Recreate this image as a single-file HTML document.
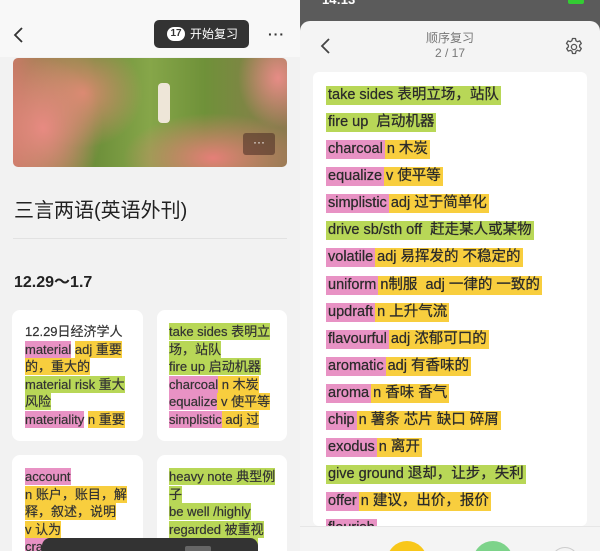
<!DOCTYPE html>
<html><head><meta charset="utf-8"><style>
*{margin:0;padding:0;box-sizing:border-box}
body{width:600px;height:551px;overflow:hidden;position:relative;font-family:"Liberation Sans","Noto Sans CJK SC",sans-serif;color:#333;background:#f2f2f2}
.a{position:absolute}
.p{background:#e892c4}.y{background:#f8ce3e}.g{background:#b8d757}
#L{left:0;top:0;width:300px;height:551px;background:#f2f2f2;overflow:hidden}
#R{left:300px;top:0;width:300px;height:551px;background:#5b5b5b;overflow:hidden}
.card{position:absolute;background:#fff;border-radius:8px;font-size:13px;line-height:17.5px;color:#333;overflow:hidden;-webkit-text-stroke:0.2px #333}
.card span{padding:1px 0}
.row{position:absolute;left:13px;font-size:14.5px;line-height:19px;white-space:nowrap;color:#2a2a2a;-webkit-text-stroke:0.25px #2a2a2a}
.row span{display:inline-block;height:19px;padding:0 2px}
</style></head><body>
<div id="L" class="a">
  <div class="a" style="left:0;top:0;width:300px;height:57px;background:#f8f8f8"></div>
  <svg class="a" style="left:12px;top:26px" width="14" height="18"><path d="M10 2 L3 9 L10 16" stroke="#333" stroke-width="1.8" fill="none"/></svg>
  <div class="a" style="left:154px;top:20px;width:95px;height:28px;background:#333;border-radius:5px;color:#fff;font-size:12px;line-height:28px">
    <span class="a" style="left:13px;top:7px;width:18px;height:14px;border-radius:7px;background:#fff;color:#333;font-size:10px;line-height:14px;text-align:center;font-weight:bold">17</span>
    <span class="a" style="left:36px;top:0">开始复习</span></div>
  <div class="a" style="left:268px;top:26px;font-size:14px;font-weight:bold;letter-spacing:1px">···</div>
  <div class="a" style="left:13px;top:58px;width:274px;height:109px;border-radius:5px;overflow:hidden;background:
   radial-gradient(ellipse 60px 70px at 30px 70px,#e88a82,transparent),
   radial-gradient(ellipse 90px 45px at 200px 100px,#e57f78,transparent),
   radial-gradient(ellipse 40px 50px at 265px 20px,#e68c86,transparent),
   radial-gradient(ellipse 60px 55px at 70px 35px,#d98a70,transparent),
   linear-gradient(90deg,#c77a66 0%,#6d8f3a 30%,#86a649 50%,#6f9139 70%,#8d7a4f 100%)">
    <div class="a" style="left:145px;top:25px;width:12px;height:40px;background:#eee6d8;border-radius:4px"></div>
    <div class="a" style="left:230px;top:75px;width:32px;height:22px;background:rgba(80,50,40,.6);border-radius:3px;color:#fff;font-size:12px;text-align:center;line-height:18px">···</div>
  </div>
  <div class="a" style="left:14px;top:194px;font-size:20px;color:#222">三言两语(英语外刊)</div>
  <div class="a" style="left:13px;top:238px;width:274px;height:1px;background:#e2e2e2"></div>
  <div class="a" style="left:14px;top:268px;font-size:16px;font-weight:bold;color:#222">12.29～1.7</div>
  <div class="card" style="left:12px;top:310px;width:131px;height:131px;padding:13px 10px 0 13px">
    <span>12.29日经济学人</span><br><span class="p">material</span> <span class="y">adj 重要的，重大的</span><br><span class="g">material risk 重大风险</span><br><span class="p">materiality</span> <span class="y">n 重要</span></div>
  <div class="card" style="left:157px;top:310px;width:130px;height:131px;padding:13px 8px 0 12px">
    <span class="g">take sides 表明立场，站队</span><br><span class="g">fire up 启动机器</span><br><span class="p">charcoal</span><span class="y"> n 木炭</span><br><span class="p">equalize</span><span class="y"> v 使平等</span><br><span class="p">simplistic</span><span class="y"> adj 过</span></div>
  <div class="card" style="left:12px;top:455px;width:131px;height:120px;padding:13px 10px 0 13px">
    <span class="p">account</span><br><span class="y">n 账户，账目，解释，叙述，说明</span><br><span class="y">v 认为</span><br><span class="p">crash</span></div>
  <div class="card" style="left:157px;top:455px;width:130px;height:120px;padding:13px 8px 0 12px">
    <span class="g">heavy note 典型例子</span><br><span class="g">be well /highly regarded 被重视</span><br><span class="g">xxxxxxxxxxxx n</span></div>
  <div class="a" style="left:42px;top:538px;width:216px;height:20px;background:#333;border-radius:8px 8px 0 0"></div>
  <div class="a" style="left:185px;top:546px;width:26px;height:6px;background:#666;border-radius:2px"></div>
</div>
<div id="R" class="a">
  <div class="a" style="left:22px;top:-8px;color:#fff;font-size:13px;font-weight:bold">14:13</div>
  <div class="a" style="left:268px;top:-4px;width:16px;height:8px;background:#3c3;border-radius:2px"></div>
  <div class="a" style="left:0;top:21px;width:300px;height:540px;background:#f4f4f4;border-radius:10px 10px 0 0"></div>
  <svg class="a" style="left:19px;top:37px" width="14" height="18"><path d="M10 2 L3 9 L10 16" stroke="#444" stroke-width="1.8" fill="none"/></svg>
  <div class="a" style="left:0;top:31px;width:300px;text-align:center;font-size:12px;color:#777;line-height:15px">顺序复习<br>2 / 17</div>
  <svg class="a" style="left:264px;top:37px" width="20" height="20" viewBox="0 0 20 20"><path d="M8.5 1.5h3l.5 2.3 1.6.9 2.2-.8 1.5 2.6-1.7 1.6v1.8l1.7 1.6-1.5 2.6-2.2-.8-1.6.9-.5 2.3h-3l-.5-2.3-1.6-.9-2.2.8-1.5-2.6 1.7-1.6V8.1L2.5 6.5 4 3.9l2.2.8 1.6-.9z" fill="none" stroke="#555" stroke-width="1.3" stroke-linejoin="round"/><circle cx="10" cy="10" r="2.6" fill="none" stroke="#555" stroke-width="1.3"/></svg>
  <div class="a" style="left:13px;top:72px;width:274px;height:454px;background:#fff;border-radius:6px;overflow:hidden">
    <div class="row" style="top:14px"><span class="g">take sides 表明立场，站队</span></div>
    <div class="row" style="top:41px"><span class="g">fire up&nbsp; 启动机器</span></div>
    <div class="row" style="top:68px"><span class="p">charcoal</span><span class="y">n 木炭</span></div>
    <div class="row" style="top:95px"><span class="p">equalize</span><span class="y">v 使平等</span></div>
    <div class="row" style="top:122px"><span class="p">simplistic</span><span class="y">adj 过于简单化</span></div>
    <div class="row" style="top:149px"><span class="g">drive sb/sth off&nbsp; 赶走某人或某物</span></div>
    <div class="row" style="top:176px"><span class="p">volatile</span><span class="y">adj 易挥发的 不稳定的</span></div>
    <div class="row" style="top:204px"><span class="p">uniform</span><span class="y">n制服&nbsp; adj 一律的 一致的</span></div>
    <div class="row" style="top:231px"><span class="p">updraft</span><span class="y">n 上升气流</span></div>
    <div class="row" style="top:258px"><span class="p">flavourful</span><span class="y">adj 浓郁可口的</span></div>
    <div class="row" style="top:285px"><span class="p">aromatic</span><span class="y">adj 有香味的</span></div>
    <div class="row" style="top:312px"><span class="p">aroma</span><span class="y">n 香味 香气</span></div>
    <div class="row" style="top:339px"><span class="p">chip</span><span class="y">n 薯条 芯片 缺口 碎屑</span></div>
    <div class="row" style="top:366px"><span class="p">exodus</span><span class="y">n 离开</span></div>
    <div class="row" style="top:393px"><span class="g">give ground 退却，让步，失利</span></div>
    <div class="row" style="top:420px"><span class="p">offer</span><span class="y">n 建议，出价，报价</span></div>
    <div class="row" style="top:447px"><span class="p">flourish</span></div>
  </div>
  <div class="a" style="left:0;top:526px;width:300px;height:30px;background:#f4f4f4;border-top:1px solid #e6e6e6"></div>
  <div class="a" style="left:87px;top:541px;width:40px;height:40px;border-radius:50%;background:#f8c71a"></div>
  <div class="a" style="left:173px;top:541px;width:40px;height:40px;border-radius:50%;background:#7dd38a"></div>
  <div class="a" style="left:251px;top:547px;width:28px;height:28px;border-radius:50%;border:1px solid #ccc"></div>
</div>
</body></html>
